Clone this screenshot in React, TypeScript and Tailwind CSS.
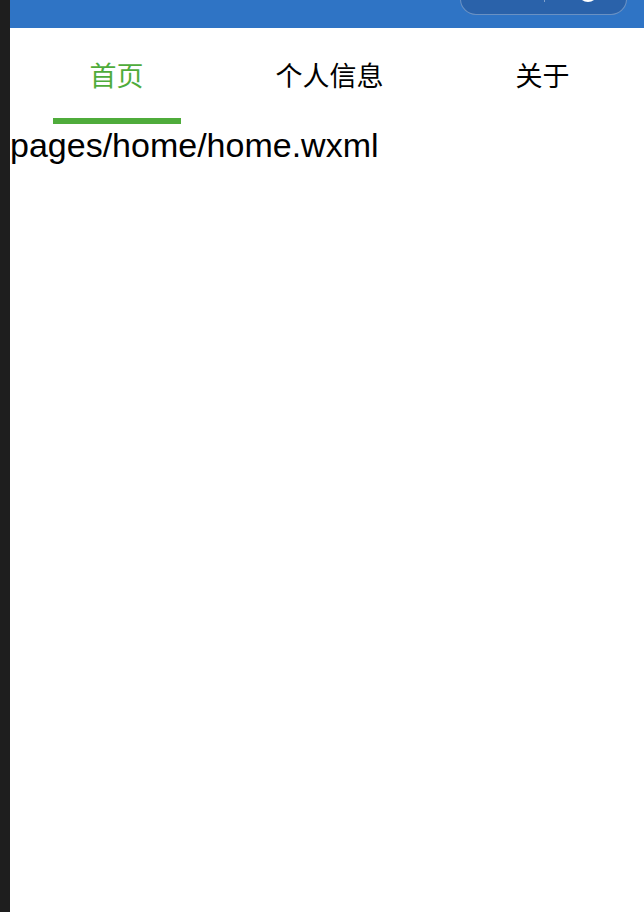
import { useState } from "react";

const tabs = ["首页", "个人信息", "关于"];

const Capsule = () => (
  <div className="absolute left-[450px] top-[-17px] h-[32px] w-[167px] rounded-full border border-white/30 bg-[#2a62aa]">
    <div className="absolute left-[83px] top-[4px] h-[14px] w-px bg-white/40" />
    <div className="absolute left-[117px] top-[-2px] h-[20px] w-[20px] rounded-full border-[3px] border-white" />
  </div>
);

export default function App() {
  const [active, setActive] = useState(0);

  return (
    <div className="flex h-[912px] w-[644px] overflow-hidden bg-white">
      <div className="w-[10px] shrink-0 bg-[#1e1e1e]" />
      <div className="flex min-w-0 flex-1 flex-col overflow-hidden">
        <div className="relative h-[28px] shrink-0 bg-[#2f74c5]">
          <Capsule />
        </div>

        <div className="flex h-[96px] shrink-0">
          {tabs.map((t, i) => (
            <button
              key={t}
              onClick={() => setActive(i)}
              className="flex w-[213px] shrink-0 flex-col items-center pt-[33px]"
            >
              <span
                className={`text-[27px] leading-[27px] ${
                  active === i ? "text-[#4fac3b]" : "text-black"
                }`}
                style={{ fontFamily: '"Noto Sans CJK SC", sans-serif' }}
              >
                {t}
              </span>
              <div
                className={`mt-auto h-[6px] w-[128px] ${
                  active === i ? "bg-[#4fac3b]" : "bg-transparent"
                }`}
              />
            </button>
          ))}
        </div>

        <p className="mt-[2px] font-['Liberation_Sans',sans-serif] text-[34px] leading-[39px] text-black">
          pages/home/home.wxml
        </p>
      </div>
    </div>
  );
}
